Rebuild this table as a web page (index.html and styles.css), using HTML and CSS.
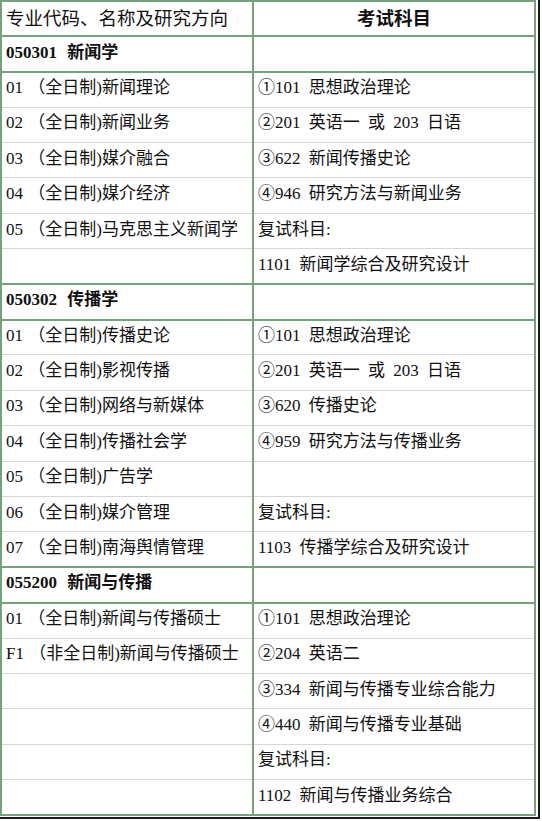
FILE: index.html
```html
<!DOCTYPE html>
<html lang="zh-CN">
<head>
<meta charset="utf-8">
<title>专业目录</title>
<link rel="stylesheet" href="styles.css">
</head>
<body>
<div class="frame">
<table class="plan">
  <tr class="head"><td class="c1">专业代码、名称及研究方向</td><td class="c2 center">考试科目</td></tr>
  <tr class="sec"><td class="c1 bold">050301 新闻学</td><td class="c2"></td></tr>
  <tr><td class="c1">01 （全日制)新闻理论</td><td class="c2">①101 思想政治理论</td></tr>
  <tr><td class="c1">02 （全日制)新闻业务</td><td class="c2">②201 英语一 或 203 日语</td></tr>
  <tr><td class="c1">03 （全日制)媒介融合</td><td class="c2">③622 新闻传播史论</td></tr>
  <tr><td class="c1">04 （全日制)媒介经济</td><td class="c2">④946 研究方法与新闻业务</td></tr>
  <tr><td class="c1">05 （全日制)马克思主义新闻学</td><td class="c2">复试科目:</td></tr>
  <tr class="last"><td class="c1"></td><td class="c2">1101 新闻学综合及研究设计</td></tr>
  <tr class="sec"><td class="c1 bold">050302 传播学</td><td class="c2"></td></tr>
  <tr><td class="c1">01 （全日制)传播史论</td><td class="c2">①101 思想政治理论</td></tr>
  <tr><td class="c1">02 （全日制)影视传播</td><td class="c2">②201 英语一 或 203 日语</td></tr>
  <tr><td class="c1">03 （全日制)网络与新媒体</td><td class="c2">③620 传播史论</td></tr>
  <tr><td class="c1">04 （全日制)传播社会学</td><td class="c2">④959 研究方法与传播业务</td></tr>
  <tr><td class="c1">05 （全日制)广告学</td><td class="c2"></td></tr>
  <tr><td class="c1">06 （全日制)媒介管理</td><td class="c2">复试科目:</td></tr>
  <tr class="last"><td class="c1">07 （全日制)南海舆情管理</td><td class="c2">1103 传播学综合及研究设计</td></tr>
  <tr class="sec"><td class="c1 bold">055200 新闻与传播</td><td class="c2"></td></tr>
  <tr><td class="c1">01 （全日制)新闻与传播硕士</td><td class="c2">①101 思想政治理论</td></tr>
  <tr><td class="c1">F1 （非全日制)新闻与传播硕士</td><td class="c2">②204 英语二</td></tr>
  <tr><td class="c1"></td><td class="c2">③334 新闻与传播专业综合能力</td></tr>
  <tr><td class="c1"></td><td class="c2">④440 新闻与传播专业基础</td></tr>
  <tr><td class="c1"></td><td class="c2">复试科目:</td></tr>
  <tr><td class="c1"></td><td class="c2">1102 新闻与传播业务综合</td></tr>
</table>
</div>
</body>
</html>
```
FILE: styles.css
```css
html, body {
  margin: 0;
  padding: 0;
  background: #ffffff;
}
.frame {
  width: 537px;
  padding: 0 1px 1px 0;
  border-right: 2px solid #1c1c1c;
  border-bottom: 2px solid #1c1c1c;
  box-sizing: content-box;
}
.plan {
  width: 536px;
  border-collapse: collapse;
  table-layout: fixed;
  border: 2px solid #73a27d;
  font-family: "Liberation Serif", "Noto Sans CJK SC", serif;
  font-size: 17px;
  line-height: 22px;
  color: #111;
}
.plan tr {
  height: 35.4px;
}
.plan td {
  padding: 0 0 3px 4px;
  border-top: 1px solid #d6d6d6;
  border-bottom: 1px solid #d6d6d6;
  white-space: nowrap;
  overflow: hidden;
  vertical-align: middle;
}
.plan td.c1 {
  width: 246px;
  border-right: 2px solid #73a27d;
  word-spacing: 1px;
}
.plan td.c2 {
  word-spacing: 4px;
}
.plan .head td {
  font-size: 18.5px;
  padding-bottom: 0;
  border-bottom: 2px solid #73a27d;
}
.plan .sec td {
  border-top: 2px solid #73a27d;
  border-bottom: 2px solid #73a27d;
}
.plan .sec td.bold {
  word-spacing: 6px;
}
.plan .last td {
  border-bottom: 2px solid #73a27d;
}
.center {
  text-align: center;
  font-weight: bold;
}
.plan td.center {
  padding-left: 0;
}
.bold {
  font-weight: bold;
}
```
